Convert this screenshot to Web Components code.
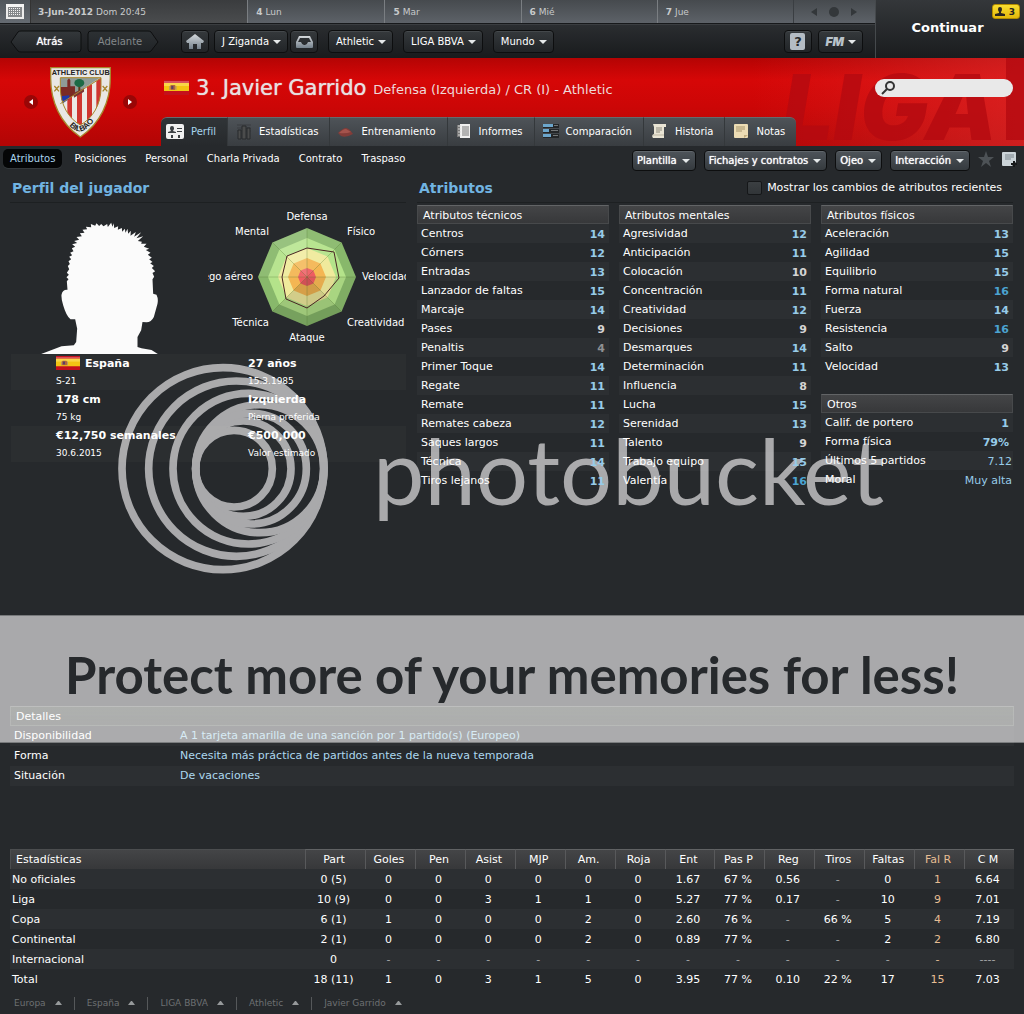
<!DOCTYPE html>
<html lang="es">
<head>
<meta charset="utf-8">
<title>Javier Garrido - Perfil</title>
<style>
html,body{margin:0;min-height:100%}
body{background:#26292c;color:#fff;font:11px "DejaVu Sans",sans-serif}
</style>
</head>
<body>
<fm-app></fm-app>
<script>
const base = `<style>
*{box-sizing:border-box}
:host{display:block}
a{color:inherit;text-decoration:none}
button{font:10px "DejaVu Sans",sans-serif;color:inherit;border:0;margin:0;padding:0;background:none;cursor:pointer}
svg{display:block;flex:none}
</style>`;
function define(tag, markup, ready) {
  const tpl = document.createElement('template');
  customElements.define(tag, class extends HTMLElement {
    constructor() {
      super();
      this.attachShadow({ mode: 'open' });
    }
    connectedCallback() {
      if (this.shadowRoot.childNodes.length) return;
      tpl.innerHTML = base + (typeof markup === 'function' ? markup(this) : markup);
      this.shadowRoot.appendChild(tpl.content.cloneNode(true));
      if (ready) ready(this);
    }
  });
}
const flag = (w, h) => `<svg width="${w}" height="${h}" viewBox="0 0 24 15" preserveAspectRatio="none" role="img" aria-label="España"><rect width="24" height="15" fill="#c4101c"/><rect y="1" width="24" height="2" fill="#d8505a"/><rect y="3" width="24" height="8" fill="#f3c413"/><rect y="3" width="24" height="3" fill="#f9d648"/><rect x="6" y="5" width="5" height="5" rx="1" fill="#b0663c"/><rect x="7" y="6" width="2" height="3" fill="#5a3f66"/><rect x="5" y="6" width="1" height="4" fill="#b89a60"/><rect x="11" y="6" width="1" height="4" fill="#b89a60"/></svg>`;

/* Menu button: dark in the toolbar, lighter with heavy text in the actions row */
define('fm-menu', el => `<style>
button{display:flex;align-items:center;gap:4px;height:23px;padding:0 6px 0 7px;border:1px solid #0d0e0f;border-radius:4px;background:linear-gradient(#35393c,#212427);box-shadow:inset 0 1px #44484b;white-space:nowrap}
:host([kind=action]) button{height:21px;padding:0 5px 0 4px;gap:5px;background:linear-gradient(#4e545a,#353a3e);box-shadow:inset 0 1px #60666b;text-shadow:0 0 1px #fff}
</style><button aria-haspopup="menu"><slot></slot><svg width="8" height="4" aria-hidden="true"><path d="M0 0h8l-4 4z" fill="#e6e9ea"/></svg></button>`);

define('fm-icon-button', el => `<style>
button{display:flex;align-items:center;justify-content:center;width:28px;height:23px;border:1px solid #0d0e0f;border-radius:4px;background:linear-gradient(#35393c,#212427);box-shadow:inset 0 1px #44484b}
</style><button aria-label="${el.getAttribute('label')}"><slot></slot></button>`);

/* Back and forward buttons with one pointed side */
define('fm-step', el => {
  const back = el.hasAttribute('back');
  const d = back ? 'M8 2L1 12l7 9q1 1 3 1h57q3 0 3-3V4q0-3-3-3H11q-2 0-3 1z' : 'M64 2l7 10l-7 9q-1 1-3 1H4q-3 0-3-3V4q0-3 3-3h57q2 0 3 1z';
  return `<style>
button{display:grid;place-items:center;width:72px;height:23px;color:${back ? '#fff' : '#83878a'};${back ? 'text-shadow:0 0 1px #fff;' : ''}}
button>*{grid-area:1/1}
span{padding:0 ${back ? '0 0 7px' : '6px 0 0'}}
</style><button ${back ? '' : 'disabled'}><svg width="72" height="23" aria-hidden="true"><defs><linearGradient id="g" x2="0" y2="1"><stop stop-color="${back ? '#34383b' : '#2d3134'}"/><stop offset="1" stop-color="#202326"/></linearGradient></defs><path d="${d}" fill="url(#g)" stroke="#0d0e0f"/></svg><span><slot></slot></span></button>`;
});

define('fm-calendar', `<style>
:host{color:#c8cacb;font-size:9px}
.bar{display:grid;grid-template-columns:30px 217fr 137fr 136fr 136fr 136fr 82fr;height:24px;background:linear-gradient(#464a4e,#5d6268);border-bottom:1px solid #17191b}
.bar>*{display:flex;align-items:center;gap:3px;padding:0 8px;border-left:1px solid #7a7e82;min-width:0;white-space:nowrap}
.bar>.cal{padding:0 6px;border:0;background:linear-gradient(#50565c,#656b72)}
.bar>.today{background:linear-gradient(#3a3c3e,#4a4c4e);border-color:#333;padding-left:7px}
.bar>.ctl{gap:12px;justify-content:center;border-color:#3a3e42}
</style><div class="bar">
<button class="cal" aria-label="Calendario"><svg width="18" height="15" shape-rendering="crispEdges"><path d="M1 2h16v12H1z" fill="#85888b" stroke="#ececec" stroke-width="2"/><path d="M0 0h18v3H0z" fill="#f4f4f4"/><path d="M3 4.500h12M3 6.500h12M3 8.500h12M3 10.500h12" stroke="#f4f4f4" stroke-dasharray="1 1"/></svg></button>
<div class="today"><b>3-Jun-2012</b><span>Dom 20:45</span></div>
<div><b>4</b><span>Lun</span></div><div><b>5</b><span>Mar</span></div><div><b>6</b><span>Mié</span></div><div><b>7</b><span>Jue</span></div>
<div class="ctl"><button aria-label="Anterior"><svg width="6" height="8"><path d="M6 0v8L0 4z" fill="#33373a"/></svg></button><button aria-label="Hoy"><svg width="10" height="10"><circle cx="5" cy="5" r="5" fill="#33373a"/></svg></button><button aria-label="Siguiente"><svg width="6" height="8"><path d="M0 0v8l6-4z" fill="#33373a"/></svg></button></div>
</div>`);

define('fm-toolbar', `<style>
.bar{display:flex;align-items:center;height:34px;padding:0 12px 0 10px;background:linear-gradient(#2a2d30,#191b1d);border-top:1px solid #3a3d40}
.bar>div{display:flex}
.steps{gap:5px;margin-right:22px}.home{margin-right:5px}.person{gap:2px;margin-right:10px}.menus{gap:10px;flex:1}.help{gap:6px}
i{font:italic 900 12px Inter,sans-serif;color:#b9c3ca}
</style><div class="bar">
<div class="steps"><fm-step back>Atrás</fm-step><fm-step>Adelante</fm-step></div>
<div class="home"><fm-icon-button label="Inicio"><svg width="18" height="15"><defs><linearGradient id="h" x2="0" y2="1"><stop stop-color="#d5d9dc"/><stop offset="1" stop-color="#74818c"/></linearGradient></defs><path d="M9 0l9 7-1 2h-2v6h-4v-5H7v5H3V9H1L0 7z" fill="url(#h)"/></svg></fm-icon-button></div>
<div class="person"><fm-menu>J Ziganda</fm-menu><fm-icon-button label="Bandeja"><svg width="17" height="12"><defs><linearGradient id="h" x2="0" y2="1"><stop stop-color="#dfe3e6"/><stop offset="1" stop-color="#74818c"/></linearGradient></defs><path d="M3 0h11l3 6v5q0 1-1 1H1q-1 0-1-1V6zM4 2L2 6h3q1 3 3 3h1q2 0 3-3h3l-2-4z" fill="url(#h)" fill-rule="evenodd"/></svg></fm-icon-button></div>
<div class="menus"><fm-menu>Athletic</fm-menu><fm-menu>LIGA BBVA</fm-menu><fm-menu>Mundo</fm-menu></div>
<div class="help"><fm-icon-button label="Ayuda"><svg width="15" height="17"><rect width="15" height="17" rx="2" fill="#b4bcc4"/><text x="8" y="13" text-anchor="middle" font-family="DejaVu Sans" font-weight="700" font-size="13" fill="#26292c">?</text></svg></fm-icon-button><fm-menu><i>FM</i></fm-menu></div>
</div>`);

define('fm-continue', `<style>
:host{background:linear-gradient(#34373a,#1a1c1e);border-left:1px solid #45494c;display:grid}
.go{font:700 13px "DejaVu Sans",sans-serif;grid-area:1/1;padding:0 5px 3px 0}
.alert{grid-area:1/1;justify-self:end;align-self:start;display:flex;align-items:center;gap:4px;margin:4px;padding:0 4px 0 2px;height:15px;border:1px solid #b28c00;border-radius:3px;background:linear-gradient(#f8dc30,#e3b90c);color:#222;font-weight:700;font-size:9px;z-index:1}
</style><button class="go">Continuar</button><button class="alert" aria-label="3 avisos"><svg width="10" height="9"><path d="M5 0q2 0 2 2 0 2-1 3v1l4 1v2H0V7l4-1V5Q3 4 3 2 3 0 5 0z" fill="#2a2620"/></svg>3</button>`);

define('fm-crest', `<svg width="61" height="71" viewBox="0 0 183 213" role="img" aria-label="Athletic Club Bilbao">
<path d="M2 2h179v32c0 70-30 136-90 176C31 170 2 104 2 34z" fill="#e9e7e4" stroke="#a8862c" stroke-width="4"/>
<clipPath id="c"><path d="M31 32h122v30c0 50-25 92-62 112C55 154 31 112 31 62z"/></clipPath>
<g clip-path="url(#c)"><rect x="30" y="30" width="125" height="150" fill="#d8ceca"/><path d="M30 108L155 32v150H30z" fill="#ece9e6"/><path d="M52 96l14-9v110H52zM81 79l15-9v120H81zM111 60l15-9v120h-15zM139 42l14-9v120h-14z" fill="#cf3530"/><path d="M30 30h123L30 110z" fill="#8f9c96"/><path d="M30 60h22V40l5-6 4 6v18h14v25L30 108z" fill="#7b2a24"/><path d="M30 88l28-3v10l-28 20z" fill="#2038a8"/><path d="M85 54h6v22h-6z" fill="#5c3c1c"/><ellipse cx="88" cy="48" rx="15" ry="12" fill="#1d6a45"/><path d="M70 78l32-14v10L72 92z" fill="#7d3434"/></g>
<path d="M31 32h122v30c0 50-25 92-62 112C55 154 31 112 31 62zM31 110L153 33" fill="none" stroke="#a8862c" stroke-width="3"/>
<path d="M13 57l14 16m0-16L13 73M158 57l14 16m0-16l-14 16" stroke="#a8862c" stroke-width="4"/>
<text x="92" y="24" text-anchor="middle" font-family="Liberation Sans" font-weight="700" font-size="22" fill="#222">ATHLETIC CLUB</text>
<path id="b" d="M42 152Q92 242 146 136" fill="none"/><text font-family="Liberation Sans" font-weight="700" font-size="24" fill="#222" text-anchor="middle"><textPath href="#b" startOffset="50%">BILBAO</textPath></text>
</svg>`);

const tabIcons = {
  perfil: '<rect width="18" height="15" y="1" rx="2" fill="#f1f1f1"/><path d="M6 3q2 0 2 2v1L7 8l3 1v1H2V9l3-1-1-2V5q0-2 2-2zM11 5h5v1h-5zM11 8h5v1h-5zM5 12h2v3H5zM12 12h2v3h-2z" fill="#3d4144"/>',
  estad: '<path d="M1 2h14M1 5h14M1 8h14" stroke="#3a3d40"/><path d="M2 7h3v9H2zM6 3h4v13H6zM11 5h3v11h-3z" fill="#4b4c4c" stroke="#292b2d"/>',
  entr: '<path d="M0 10q5-5 8-5t7 6q-7 4-12 2z" fill="#823c38"/><path d="M1 10q4-4 7-4l5 3q-5 2-12 1z" fill="#a4534c"/>',
  inf: '<path d="M1 2h3v12H1z" fill="#777"/><path d="M4 1h10v14H4z" fill="#efefef"/><path d="M6 4h7M6 6h7M6 8h7M6 10h7M6 12h7" stroke="#777"/><path d="M2 3h3M2 6h3M2 9h3M2 12h3" stroke="#ddd"/>',
  comp: '<path d="M0 1h16v4H0zM0 6h16v4H0zM0 11h16v4H0z" fill="#242628"/><path d="M0 1h10v3H0zM0 6h6v3H0zM0 11h8v3H0z" fill="#6ca6cc"/><path d="M11 2h4v1h-4zM8 7h7v1H8zM10 12h5v1h-5z" fill="#747778"/>',
  hist: '<path d="M1 1h13v3h-2v11H1q-2-3 1-4V4z" fill="#e9e4d4"/><path d="M4 5h6M4 7h6M4 9h4" stroke="#8d897c"/><path d="M1 12h11" stroke="#bcb5a2"/>',
  notas: '<rect x="1" y="1" width="14" height="14" rx="1" fill="#ecdcb4"/><path d="M3 4h9M3 6h9M3 8h6" stroke="#a5946c"/><path d="M11 15v-3h4z" fill="#c2ae80"/>'
};
define('fm-tab', el => `<style>
a{display:flex;align-items:center;gap:7px;height:29px;padding:0 11px 2px 8px;border-left:1px solid #34383b;border-top:1px solid #666a6e;background:linear-gradient(#4e5358,#393d41);font-size:10px;white-space:nowrap}
:host(:first-child) a{background:linear-gradient(#303437,#26292c);border-top-left-radius:6px;padding-left:5px;border-left:0;color:#a9d4ec}
:host(:last-child) a{border-top-right-radius:6px}
</style><a href="#"><svg width="${el.getAttribute('icon') === 'perfil' ? 18 : 16}" height="17" aria-hidden="true">${tabIcons[el.getAttribute('icon')]}</svg><slot></slot></a>`);

define('fm-player-header', `<style>
:host{display:grid;grid-template-columns:161px 1fr;background:linear-gradient(#b40404,#d60707 25%,#cc0606 55%,#b20505)}
.art{grid-area:1/1/3/3;justify-self:end;width:272px;height:88px}
.club{grid-area:1/1/3/2;display:flex;align-items:center;justify-content:center;gap:12px}
.who{grid-area:1/2;display:flex;align-items:center;height:59px;padding:0 11px 0 3px;gap:7px}
h1{font-size:21px;font-weight:400;margin:0;color:#e8e0e0;text-shadow:0 0 1px currentColor;white-space:nowrap}
p{margin:3px 0 0;font-size:13px;color:#eedada;flex:1;white-space:nowrap}
.search{display:flex;align-items:center;gap:4px;width:138px;height:18px;border-radius:9px;background:#e9e9e9;padding:0 6px}
input{flex:1;min-width:0;border:0;background:none;outline:0;font:inherit;color:#222}
nav{grid-area:2/2;display:flex}
</style>
<svg class="art" viewBox="0 0 272 88" aria-hidden="true"><defs><linearGradient id="l"><stop stop-color="#e03030" stop-opacity="0"/><stop offset="1" stop-color="#e03030" stop-opacity=".6"/></linearGradient></defs><rect width="272" height="88" fill="url(#l)"/><text x="30" y="82" font-family="Inter" font-style="italic" font-weight="900" font-size="91" fill="#b40a10" fill-opacity=".8">LIGA</text><path d="M254 0h18v82h-18z" fill="#b40a10" fill-opacity=".8"/></svg>
<div class="club"><button aria-label="Jugador anterior"><svg width="14" height="14"><circle cx="7" cy="7" r="7" fill="#990606"/><path d="M9 4v6L5 7z" fill="#fff"/></svg></button><fm-crest></fm-crest><button aria-label="Jugador siguiente"><svg width="14" height="14"><circle cx="7" cy="7" r="7" fill="#990606"/><path d="M5 4v6l4-3z" fill="#fff"/></svg></button></div>
<div class="who">${flag(25, 15)}<h1>3. Javier Garrido</h1><p>Defensa (Izquierda) / CR (I) - Athletic</p>
<label class="search"><svg width="14" height="14" aria-hidden="true"><circle cx="9" cy="5" r="4" fill="none" stroke="#333" stroke-width="2"/><path d="M6 8l-5 5" stroke="#333" stroke-width="2"/></svg><input type="search" aria-label="Buscar"></label></div>
<nav><fm-tab icon="perfil">Perfil</fm-tab><fm-tab icon="estad">Estadísticas</fm-tab><fm-tab icon="entr">Entrenamiento</fm-tab><fm-tab icon="inf">Informes</fm-tab><fm-tab icon="comp">Comparación</fm-tab><fm-tab icon="hist">Historia</fm-tab><fm-tab icon="notas">Notas</fm-tab></nav>`);

define('fm-subnav', `<style>
:host{display:flex;justify-content:space-between;height:29px;padding:3px 7px 0 3px;font-size:10px}
nav{display:flex;gap:5px}
nav a{height:19px;line-height:20px;padding:0 7px}
nav a:first-child{background:#050607;color:#a9d4ec;border-radius:5px;box-shadow:0 1px #34383b}
.act{display:flex;gap:8px;align-items:flex-start;padding-top:1px}
.act>button{height:18px}
</style><nav><a href="#">Atributos</a><a href="#">Posiciones</a><a href="#">Personal</a><a href="#">Charla Privada</a><a href="#">Contrato</a><a href="#">Traspaso</a></nav>
<div class="act"><fm-menu kind="action">Plantilla</fm-menu><fm-menu kind="action">Fichajes y contratos</fm-menu><fm-menu kind="action">Ojeo</fm-menu><fm-menu kind="action">Interacción</fm-menu>
<button aria-label="Favorito"><svg width="16" height="16" viewBox="0 0 16 16"><path d="M8 0l2 6h6l-5 4 2 6-5-4-5 4 2-6-5-4h6z" fill="#4d5256"/></svg></button>
<button aria-label="Añadir nota"><svg width="15" height="15"><path d="M1 0h12q1 0 1 1v9l-4 4H1q-1 0-1-1V1q0-1 1-1z" fill="#ccd4d9"/><path d="M3 3h9M3 5h9M3 7h6" stroke="#7b858c"/><path d="M12 9v6M9 12h6" stroke="#17191b" stroke-width="2"/></svg></button></div>`);

define('fm-title', `<style>
:host{display:flex;align-items:center;justify-content:space-between;height:28px;border-bottom:1px solid #1d2022;padding:0 11px 2px 2px}
h2{margin:0;font-size:14px;color:#71b4e2}
</style><h2><slot></slot></h2><slot name="side"></slot>`);

define('fm-toggle', `<style>
label{display:flex;align-items:center;gap:5px}
input{appearance:none;width:15px;height:14px;margin:0;border:1px solid #151719;border-radius:2px;background:linear-gradient(#3b3f42,#313538)}
</style><label><input type="checkbox"><slot></slot></label>`);

define('fm-radar', () => {
  const oct = r => Array.from({ length: 8 }, (_, i) => {
    const a = i * Math.PI / 4;
    return (99 + r * Math.sin(a)).toFixed(1) + ',' + (69 - r * Math.cos(a)).toFixed(1);
  });
  const rings = [[49, '#88b86b'], [39, '#b4e38a'], [29, '#f0ea9c'], [19, '#f4b653'], [9, '#ee5c62']].map(([r, c]) => `<polygon points="${oct(r).join(' ')}" fill="${c}"/>`).join('');
  const spokes = oct(49).map(p => `<path d="M99,69L${p}"/>`).join('');
  const shade = oct(49).map((p, i, all) => `<polygon points="99,69 ${p} ${all[(i + 1) % 8]}" fill="${i > 1 && i < 6 ? '#000' : '#fff'}" fill-opacity="${[.06, 0, .06, .14, .12, 0, .06, .14][i]}"/>`).join('');
  const t = (x, y, s, a = 'start') => `<text x="${x}" y="${y}" text-anchor="${a}">${s}</text>`;
  return `<svg width="198" height="138" role="img" aria-label="Gráfico de atributos" font-size="10" fill="#fff" style="overflow:hidden">${rings}${shade}<g stroke="#50752f" stroke-opacity=".3">${spokes}</g>
<path d="M99 40l27 4 5 26-15 18-17 12-21-9-4-22 5-21z" fill="none" stroke="#4a2524"/>
${t(99, 12, 'Defensa', 'middle')}${t(61, 27, 'Mental', 'end')}${t(139, 27, 'Físico')}${t(45, 72, 'Juego aéreo', 'end')}${t(154, 72, 'Velocidad')}${t(61, 118, 'Técnica', 'end')}${t(139, 118, 'Creatividad')}${t(99, 133, 'Ataque', 'middle')}</svg>`;
});

define('fm-profile', `<style>
.top{display:flex;justify-content:space-between;padding:5px 0 0 31px;height:151px}
.top svg{align-self:flex-end}
dl{margin:0}
.row{display:grid;grid-template-columns:192px 1fr;height:36px;margin-left:1px;padding-left:45px}
.row:nth-child(odd){background:rgba(255,255,255,.025)}
dt{font-weight:700;height:18px;display:flex;align-items:center;gap:5px}
dd{margin:0;font-size:9px;height:18px;line-height:18px}
</style>
<div class="top"><svg width="117" height="132" viewBox="124 140 350 396" role="img" aria-label="Silueta del jugador"><path fill="#fbfbfb" d="M124 536L185 513 222 510 229 500 232 460 226 432 212 432Q200 424 190 390 184 372 185 358 188 342 203 343L201 318 206 312 200 306 207 298 201 292 208 282 204 272 210 266 206 258 214 252 208 244 217 240 211 232 221 228 216 219 226 214 217 207 232 203 223 197 238 193 230 185 246 183 240 174 254 172 248 163 262 162 258 154 274 156 273 146 286 151 290 144 298 152 304 146 311 153 322 146 324 155 334 142 338 154 342 144 343 158 355 153 354 163 366 158 367 169 375 160 377 172 383 160 385 175 393 166 392 181 408 170 403 184 424 171 410 189 430 183 414 197 426 199 424 205 440 205 432 214 448 220 438 224 452 232 444 238 456 247 448 252 458 260 451 264 462 272 456 278 466 288 458 293 463 304 458 312 460 355 470 358Q476 370 473 385L462 425Q454 441 440 441L428 440 424 465 413 485 413 515 425 519 455 524 474 536z"/></svg><fm-radar></fm-radar></div>
<dl>
<div class="row"><div><dt>${flag(24, 14)}España</dt><dd>S-21</dd></div><div><dt>27 años</dt><dd>15.3.1985</dd></div></div>
<div class="row"><div><dt>178 cm</dt><dd>75 kg</dd></div><div><dt>Izquierda</dt><dd>Pierna preferida</dd></div></div>
<div class="row"><div><dt>€12,750 semanales</dt><dd>30.6.2015</dd></div><div><dt>€500,000</dt><dd>Valor estimado</dd></div></div>
</dl>`);

const tone = v => v >= 16 ? 'top' : v >= 11 || v === 1 ? 'good' : v >= 8 ? 'mid' : 'low';
define('fm-attributes', el => {
  const rows = el.getAttribute('values').split(',').map(r => r.split(':'));
  return `<style>
table{width:100%;border-collapse:separate;border-spacing:0}
th,td{height:19px;padding:0;font-weight:400;text-align:left;line-height:13px}
thead th{padding:2px 5px 0;background:linear-gradient(#444547,#37383a);border:1px solid #47494b;border-top-color:#626466}
tbody tr:nth-child(odd){background:rgba(255,255,255,.03)}
tbody th{padding:0 0 0 4px}
td{text-align:right;font-weight:700;padding:1px 4px 0 0}
.good,.plain{color:#97cbe8}.top{color:#4ba3d0}.mid{color:#d4d4d4}.low{color:#8f9193}
.plain{font-weight:400;padding-right:1px}
</style><table><thead><tr><th colspan="2">${el.getAttribute('heading')}</th></tr></thead><tbody>${rows.map(([n, v]) => `<tr><th scope="row">${n}</th><td class="${/^\d+$/.test(v) ? tone(+v) : v.endsWith('%') ? 'good' : 'plain'}">${v}</td></tr>`).join('')}</tbody></table>`;
});

define('fm-details', `<style>
h3{margin:0;height:20px;padding:0 5px;line-height:20px;font-size:11px;font-weight:400;background:linear-gradient(rgba(190,200,185,.23),rgba(190,195,185,.17));border:1px solid rgba(255,255,255,.12);border-top-color:rgba(255,255,255,.2)}
dl{margin:0}
dl div{display:grid;grid-template-columns:166px 1fr;height:20px;line-height:20px;padding-left:4px}
dl div:nth-child(odd){background:rgba(255,255,255,.03)}
dd{margin:0;color:#add8ef}
dl div:first-child dd{color:#d8ebf5}
</style><h3>Detalles</h3><dl><div><dt>Disponibilidad</dt><dd>A 1 tarjeta amarilla de una sanción por 1 partido(s) (Europeo)</dd></div><div><dt>Forma</dt><dd>Necesita más práctica de partidos antes de la nueva temporada</dd></div><div><dt>Situación</dt><dd>De vacaciones</dd></div></dl>`);

define('fm-stats', () => {
  const head = 'Estadísticas|Part|Goles|Pen|Asist|MJP|Am.|Roja|Ent|Pas P|Reg|Tiros|Faltas|Fal R|C M'.split('|');
  const rows = ['No oficiales|0 (5)|0|0|0|0|0|0|1.67|67 %|0.56|-|0|1|6.64', 'Liga|10 (9)|0|0|3|1|1|0|5.27|77 %|0.17|-|10|9|7.01', 'Copa|6 (1)|1|0|0|0|2|0|2.60|76 %|-|66 %|5|4|7.19', 'Continental|2 (1)|0|0|0|0|2|0|0.89|77 %|-|-|2|2|6.80', 'Internacional|0|-|-|-|-|-|-|-|-|-|-|-|-|----', 'Total|18 (11)|1|0|3|1|5|0|3.95|77 %|0.10|22 %|17|15|7.03'].map(r => r.split('|'));
  return `<style>
table{width:100%;border-collapse:separate;border-spacing:0;table-layout:fixed}
th,td{height:20px;padding:0 3px 0 0;text-align:center;font-weight:400;line-height:13px;white-space:nowrap}
thead th{background:linear-gradient(#444547,#37383a);border-left:1px solid #58595b;border-top:1px solid #606264}
thead th:first-child{text-align:left;padding-left:5px;border-color:#4b4d4f}
tbody th{text-align:left;padding-left:2px}
tbody tr:nth-child(odd){background:rgba(255,255,255,.03)}
.dash{color:#a5a7a8}
tr>:nth-child(14){color:#e6bd93}
.first{width:295px}.part{width:60px}
</style><table><colgroup><col class="first"><col class="part"><col span="13"></colgroup><thead><tr>${head.map(h => `<th scope="col">${h}</th>`).join('')}</tr></thead><tbody>${rows.map(r => `<tr>${r.map((c, i) => i ? `<td${c[0] === '-' ? ' class="dash"' : ''}>${c}</td>` : `<th scope="row">${c}</th>`).join('')}</tr>`).join('')}</tbody></table>`;
});

define('fm-crumbs', `<style>
nav{display:flex;align-items:center;height:25px;padding:3px 0 0 14px;font-size:9px;color:#6d7072}
a{display:flex;align-items:center;gap:9px;height:13px;padding-right:12px;margin-right:12px;border-right:1px solid #55585a}
a:last-child{border:0}
</style><nav>${['Europa', 'España', 'LIGA BBVA', 'Athletic', 'Javier Garrido'].map(t => `<a href="#">${t}<svg width="7" height="4" aria-hidden="true"><path d="M0 4h7L4 0H3z" fill="#96999b"/></svg></a>`).join('')}</nav>`);

/* Host's mark, lying behind the page's panels */
define('fm-watermark', `<style>
:host{position:absolute;left:0;right:0;top:363px;z-index:-1;color:#a9a9ab;overflow:hidden}
.logo{display:flex;align-items:center;gap:45px;height:212px;margin:0 0 40px 118px;font:400 92px Lato,sans-serif}
.band{height:128px;display:flex;align-items:center;justify-content:center;padding-bottom:10px;background:#a9a9ab;color:#26292c;font:700 51px Lato,sans-serif;white-space:nowrap;border:solid #77797b;border-width:1px 0}
</style><div class="logo"><svg width="210" height="212" viewBox="55 38 630 636" fill="none" stroke="#a9a9ab" stroke-width="23" aria-hidden="true"><circle cx="370" cy="355" r="303"/><circle cx="410" cy="355" r="263"/><circle cx="446" cy="355" r="226"/><circle cx="480" cy="355" r="192"/><circle cx="403" cy="355" r="115"/><circle cx="431" cy="355" r="143"/><circle cx="454" cy="355" r="166"/></svg><span>photobucket</span></div><div class="band">Protect more of your memories for less!</div>`);

define('fm-app', `<style>
:host{position:relative;isolation:isolate}
.top{display:grid;grid-template-columns:1fr 149px}
.cols{display:grid;grid-template-columns:396px 1fr;gap:11px;padding:0 11px 0 10px}
.attrs{display:grid;grid-template-columns:1fr 1fr 1fr;gap:10px;padding-top:2px}
.attrs>div{display:grid;gap:18px;align-content:start}
fm-details{margin:216px 10px 63px}
fm-stats{margin:0 10px}
</style>
<fm-watermark></fm-watermark>
<div class="top"><div><fm-calendar></fm-calendar><fm-toolbar></fm-toolbar></div><fm-continue></fm-continue></div>
<fm-player-header></fm-player-header>
<fm-subnav></fm-subnav>
<div class="cols">
<section><fm-title>Perfil del jugador</fm-title><fm-profile></fm-profile></section>
<section><fm-title>Atributos<fm-toggle slot="side">Mostrar los cambios de atributos recientes</fm-toggle></fm-title>
<div class="attrs">
<div><fm-attributes heading="Atributos técnicos" values="Centros:14,Córners:12,Entradas:13,Lanzador de faltas:15,Marcaje:14,Pases:9,Penaltis:4,Primer Toque:14,Regate:11,Remate:11,Remates cabeza:12,Saques largos:11,Técnica:14,Tiros lejanos:11"></fm-attributes></div>
<div><fm-attributes heading="Atributos mentales" values="Agresividad:12,Anticipación:11,Colocación:10,Concentración:11,Creatividad:12,Decisiones:9,Desmarques:14,Determinación:11,Influencia:8,Lucha:15,Serenidad:13,Talento:9,Trabajo equipo:15,Valentía:16"></fm-attributes></div>
<div><fm-attributes heading="Atributos físicos" values="Aceleración:13,Agilidad:15,Equilibrio:15,Forma natural:16,Fuerza:14,Resistencia:16,Salto:9,Velocidad:13"></fm-attributes><fm-attributes heading="Otros" values="Calif. de portero:1,Forma física:79%,Últimos 5 partidos:7.12,Moral:Muy alta"></fm-attributes></div>
</div></section></div>
<fm-details></fm-details>
<fm-stats></fm-stats>
<fm-crumbs></fm-crumbs>`);
</script>
</body>
</html>
